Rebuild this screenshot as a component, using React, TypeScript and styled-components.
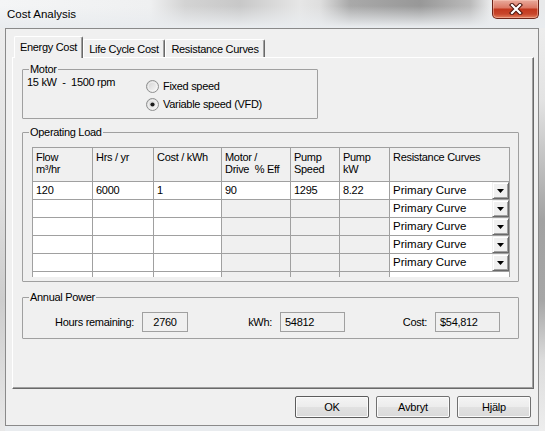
import styled, { createGlobalStyle } from 'styled-components';

const GlobalStyle = createGlobalStyle`
  html, body {
    margin: 0;
    padding: 0;
  }
  body {
    width: 545px;
    height: 431px;
    overflow: hidden;
    font-family: 'Liberation Sans', Arial, sans-serif;
    font-size: 11px;
    color: #000;
  }
`;

const Desktop = styled.div`
  width: 545px;
  height: 431px;
  display: flex;
  flex-direction: column;
  background:
    linear-gradient(180deg, rgba(233, 236, 239, 0) 0, rgba(233, 236, 239, 0) 6px, #e9ecef 27px) 0 0 / 100% 28px no-repeat,
    linear-gradient(90deg, #f4f5f6 0, #eff0f1 150px, #d3d3d3 185px, #c8c8c8 240px, #e6e6e6 300px, #dedede 320px, #a9a9a9 350px, #989898 420px, #bababa 470px, #e8e9ea 490px) 0 0 / 100% 28px no-repeat,
    linear-gradient(180deg, #f1f1f1 0, #e3e3e3 100px, #a2a2a2 220px, #a6a6a6 300px, #dcdcdc 360px, #eeeeee 431px) right 0 top 0 / 6px 100% no-repeat,
    linear-gradient(180deg, #efefef 0, #dedede 200px, #cdcdcd 300px, #e8e8e8 431px) 0 0 / 5px 100% no-repeat,
    #e9ecef;
`;

const TitleBar = styled.div`
  height: 28px;
  flex: none;
  display: flex;
  align-items: flex-start;
  justify-content: space-between;
  padding: 0 6px 0 7px;
`;

const Title = styled.div`
  font-size: 11.5px;
  line-height: 29px;
  color: #000;
`;

const CloseButton = styled.div`
  width: 47px;
  height: 19px;
  box-sizing: border-box;
  display: flex;
  align-items: center;
  justify-content: center;
  border: 1px solid #6d2418;
  border-top: none;
  border-radius: 0 0 5px 5px;
  background: linear-gradient(180deg, #e9ab9c 0%, #dc7a66 42%, #c2381e 52%, #c8462b 78%, #e2805f 100%);
  box-shadow: inset 0 0 0 1px rgba(255, 210, 195, 0.45);
`;

const Client = styled.div`
  margin-left: 5px;
  width: 534px;
  height: 398px;
  box-sizing: border-box;
  border: 1px solid #8a8a8a;
  background: #f0f0f0;
  display: flex;
  flex-direction: column;
  padding: 7px 4px 7px 6px;
`;

const TabStrip = styled.div`
  height: 21px;
  flex: none;
  display: flex;
  align-items: flex-end;
  padding-left: 2px;
`;

const Tab = styled.div<{ $w: number; $active?: boolean }>`
  width: ${p => p.$w}px;
  height: ${p => (p.$active ? 22 : 18)}px;
  margin-bottom: ${p => (p.$active ? -1 : 0)}px;
  position: relative;
  z-index: ${p => (p.$active ? 2 : 1)};
  box-sizing: border-box;
  background: #f0f0f0;
  border-top: 1px solid #fff;
  border-left: 1px solid #fff;
  border-right: 1px solid #696969;
  border-radius: 2px 2px 0 0;
  box-shadow: inset -1px 0 0 #a0a0a0;
  display: flex;
  justify-content: center;
  padding-top: ${p => (p.$active ? 3 : 2)}px;
  line-height: 14px;
  letter-spacing: -0.3px;
  white-space: nowrap;
`;

const Panel = styled.div`
  width: 522px;
  height: 332px;
  flex: none;
  box-sizing: border-box;
  border-top: 1px solid #fff;
  border-left: 1px solid #fff;
  border-right: 1px solid #696969;
  border-bottom: 1px solid #696969;
  box-shadow: inset -1px -1px 0 #a0a0a0;
  display: flex;
  flex-direction: column;
  align-items: flex-start;
  padding: 4px 0 0 9px;
`;

const Group = styled.fieldset<{ $w: number; $mt?: number }>`
  margin: ${p => p.$mt ?? 0}px 0 0 0;
  padding: 0;
  min-width: 0;
  width: ${p => p.$w}px;
  box-sizing: border-box;
  border: 1px solid #a0a0a0;
  border-radius: 1px;
`;

const Legend = styled.legend`
  margin-left: 6px;
  padding: 0 1px;
  line-height: 14px;
  letter-spacing: -0.3px;
`;

const MotorBody = styled.div`
  display: flex;
  padding: 0 0 5px 4px;
`;

const MotorSpec = styled.div`
  width: 119px;
  line-height: 13px;
  white-space: pre;
  letter-spacing: -0.3px;
`;

const RadioList = styled.div`
  display: flex;
  flex-direction: column;
  padding-top: 1px;
`;

const RadioRow = styled.div`
  height: 18px;
  display: flex;
  align-items: center;
  gap: 4px;
  letter-spacing: -0.3px;
`;

const LoadBody = styled.div`
  padding: 8px 0 4px 9px;
`;

const Grid = styled.div`
  width: 478px;
  height: 130px;
  overflow: hidden;
  box-sizing: border-box;
  display: grid;
  grid-template-columns: 60px 61px 68px 69px 49px 50px 120px;
  grid-template-rows: 34px;
  grid-auto-rows: 18px;
  border-top: 1px solid #a0a0a0;
  border-left: 1px solid #a0a0a0;
`;

const HeadCell = styled.div`
  box-sizing: border-box;
  border-right: 1px solid #a0a0a0;
  border-bottom: 1px solid #a0a0a0;
  background: #f0f0f0;
  padding: 3px 3px 0;
  line-height: 12px;
  white-space: pre;
  letter-spacing: -0.3px;
`;

const Cell = styled.div<{ $gray?: boolean }>`
  box-sizing: border-box;
  border-right: 1px solid #a0a0a0;
  border-bottom: 1px solid #a0a0a0;
  background: ${p => (p.$gray ? '#f0f0f0' : '#fff')};
  padding: 0 3px;
  line-height: 17px;
  letter-spacing: -0.3px;
  white-space: nowrap;
  overflow: hidden;
`;

const ComboCell = styled.div`
  box-sizing: border-box;
  border-right: 1px solid #a0a0a0;
  border-bottom: 1px solid #a0a0a0;
  background: #fff;
  display: flex;
`;

const ComboText = styled.div`
  flex: 1;
  padding-left: 3px;
  font-size: 11.5px;
  line-height: 17px;
  white-space: nowrap;
`;

const ComboButton = styled.div`
  width: 17px;
  height: 17px;
  box-sizing: border-box;
  background: #f0f0f0;
  border: 1px solid;
  border-color: #f0f0f0 #696969 #696969 #f0f0f0;
  box-shadow: inset 1px 1px 0 #fff, inset -1px -1px 0 #a0a0a0;
  display: flex;
  align-items: center;
  justify-content: center;
`;

const PowerBody = styled.div`
  display: flex;
  align-items: center;
  padding: 8px 0 6px 0;
`;

const Field = styled.div`
  display: flex;
  align-items: center;
  gap: 8px;
`;

const FieldLabel = styled.div<{ $w: number }>`
  width: ${p => p.$w}px;
  text-align: right;
  letter-spacing: -0.3px;
  white-space: nowrap;
`;

const ReadBox = styled.div<{ $w: number; $center?: boolean }>`
  width: ${p => p.$w}px;
  height: 20px;
  box-sizing: border-box;
  border: 1px solid #a0a0a0;
  background: #f0f0f0;
  line-height: 18px;
  padding: 0 4px;
  text-align: ${p => (p.$center ? 'center' : 'left')};
  letter-spacing: -0.3px;
`;

const ButtonRow = styled.div`
  display: flex;
  justify-content: flex-end;
  gap: 7px;
  margin-top: 7px;
  padding-right: 3px;
  width: 522px;
  box-sizing: border-box;
`;

const Button = styled.div<{ $default?: boolean }>`
  width: 74px;
  height: 22px;
  box-sizing: border-box;
  border: 1px solid ${p => (p.$default ? '#5c5c5c' : '#707070')};
  border-radius: 2px;
  background: linear-gradient(180deg, #f4f4f4 0%, #ececec 50%, #e1e1e1 51%, #dadada 100%);
  box-shadow: inset 0 0 0 1px #fbfbfb;
  display: flex;
  align-items: center;
  justify-content: center;
  letter-spacing: -0.2px;
`;

const Radio = ({ checked }: { checked?: boolean }) => (
  <svg width="13" height="13" viewBox="0 0 13 13">
    <defs>
      <linearGradient id={checked ? 'radioOn' : 'radioOff'} x1="0" y1="0" x2="1" y2="1">
        <stop offset="0" stopColor="#cfcfcf" />
        <stop offset="1" stopColor="#fbfbfb" />
      </linearGradient>
    </defs>
    <circle cx="6.5" cy="6.5" r="6" fill={`url(#${checked ? 'radioOn' : 'radioOff'})`} stroke="#8e8f8f" />
    <circle cx="6.5" cy="6.5" r="4.3" fill="none" stroke="#f4f4f4" strokeWidth="0.8" />
    {checked && <circle cx="6.5" cy="6.5" r="2.1" fill="#1c1c1c" />}
  </svg>
);

const Arrow = () => (
  <svg width="7" height="4" viewBox="0 0 7 4">
    <polygon points="0,0 7,0 3.5,4" fill="#000" />
  </svg>
);

const CloseGlyph = () => (
  <svg width="14" height="12" viewBox="0 0 14 12">
    <path d="M3 2 L11 10 M11 2 L3 10" stroke="#4a140c" strokeWidth="4.2" strokeLinecap="square" />
    <path d="M3 2 L11 10 M11 2 L3 10" stroke="#fff" strokeWidth="2.2" strokeLinecap="square" />
  </svg>
);

type LoadRow = {
  flow?: string;
  hrs?: string;
  cost?: string;
  eff?: string;
  speed?: string;
  kw?: string;
  curve?: string;
};

const loadRows: LoadRow[] = [
  { flow: '120', hrs: '6000', cost: '1', eff: '90', speed: '1295', kw: '8.22', curve: 'Primary Curve' },
  { curve: 'Primary Curve' },
  { curve: 'Primary Curve' },
  { curve: 'Primary Curve' },
  { curve: 'Primary Curve' },
  {},
];

const headers = ['Flow\nm³/hr', 'Hrs / yr', 'Cost / kWh', 'Motor /\nDrive  % Eff', 'Pump\nSpeed', 'Pump\nkW', 'Resistance Curves'];

const App = () => {
  return (
    <>
      <GlobalStyle />
      <Desktop>
        <TitleBar>
          <Title>Cost Analysis</Title>
          <CloseButton>
            <CloseGlyph />
          </CloseButton>
        </TitleBar>
        <Client>
          <TabStrip>
            <Tab $w={69} $active>Energy Cost</Tab>
            <Tab $w={82}>Life Cycle Cost</Tab>
            <Tab $w={100}>Resistance Curves</Tab>
          </TabStrip>
          <Panel>
            <Group $w={296}>
              <Legend>Motor</Legend>
              <MotorBody>
                <MotorSpec>{'15 kW  -  1500 rpm'}</MotorSpec>
                <RadioList>
                  <RadioRow>
                    <Radio />
                    Fixed speed
                  </RadioRow>
                  <RadioRow>
                    <Radio checked />
                    Variable speed (VFD)
                  </RadioRow>
                </RadioList>
              </MotorBody>
            </Group>

            <Group $w={497} $mt={6}>
              <Legend>Operating Load</Legend>
              <LoadBody>
                <Grid>
                  {headers.map(h => (
                    <HeadCell key={h}>{h}</HeadCell>
                  ))}
                  {loadRows.map((r, i) => {
                    const gray = i > 0;
                    return [
                      <Cell key={`f${i}`}>{r.flow}</Cell>,
                      <Cell key={`h${i}`}>{r.hrs}</Cell>,
                      <Cell key={`c${i}`}>{r.cost}</Cell>,
                      <Cell key={`e${i}`} $gray={gray}>{r.eff}</Cell>,
                      <Cell key={`s${i}`} $gray={gray}>{r.speed}</Cell>,
                      <Cell key={`k${i}`} $gray={gray}>{r.kw}</Cell>,
                      r.curve ? (
                        <ComboCell key={`r${i}`}>
                          <ComboText>{r.curve}</ComboText>
                          <ComboButton>
                            <Arrow />
                          </ComboButton>
                        </ComboCell>
                      ) : (
                        <Cell key={`r${i}`} />
                      ),
                    ];
                  })}
                </Grid>
              </LoadBody>
            </Group>

            <Group $w={497} $mt={8}>
              <Legend>Annual Power</Legend>
              <PowerBody>
                <Field>
                  <FieldLabel $w={111}>Hours remaining:</FieldLabel>
                  <ReadBox $w={46} $center>2760</ReadBox>
                </Field>
                <Field>
                  <FieldLabel $w={84}>kWh:</FieldLabel>
                  <ReadBox $w={65}>54812</ReadBox>
                </Field>
                <Field>
                  <FieldLabel $w={82}>Cost:</FieldLabel>
                  <ReadBox $w={65}>$54,812</ReadBox>
                </Field>
              </PowerBody>
            </Group>
          </Panel>
          <ButtonRow>
            <Button $default>OK</Button>
            <Button>Avbryt</Button>
            <Button>Hjälp</Button>
          </ButtonRow>
        </Client>
      </Desktop>
    </>
  );
};

export default App;
